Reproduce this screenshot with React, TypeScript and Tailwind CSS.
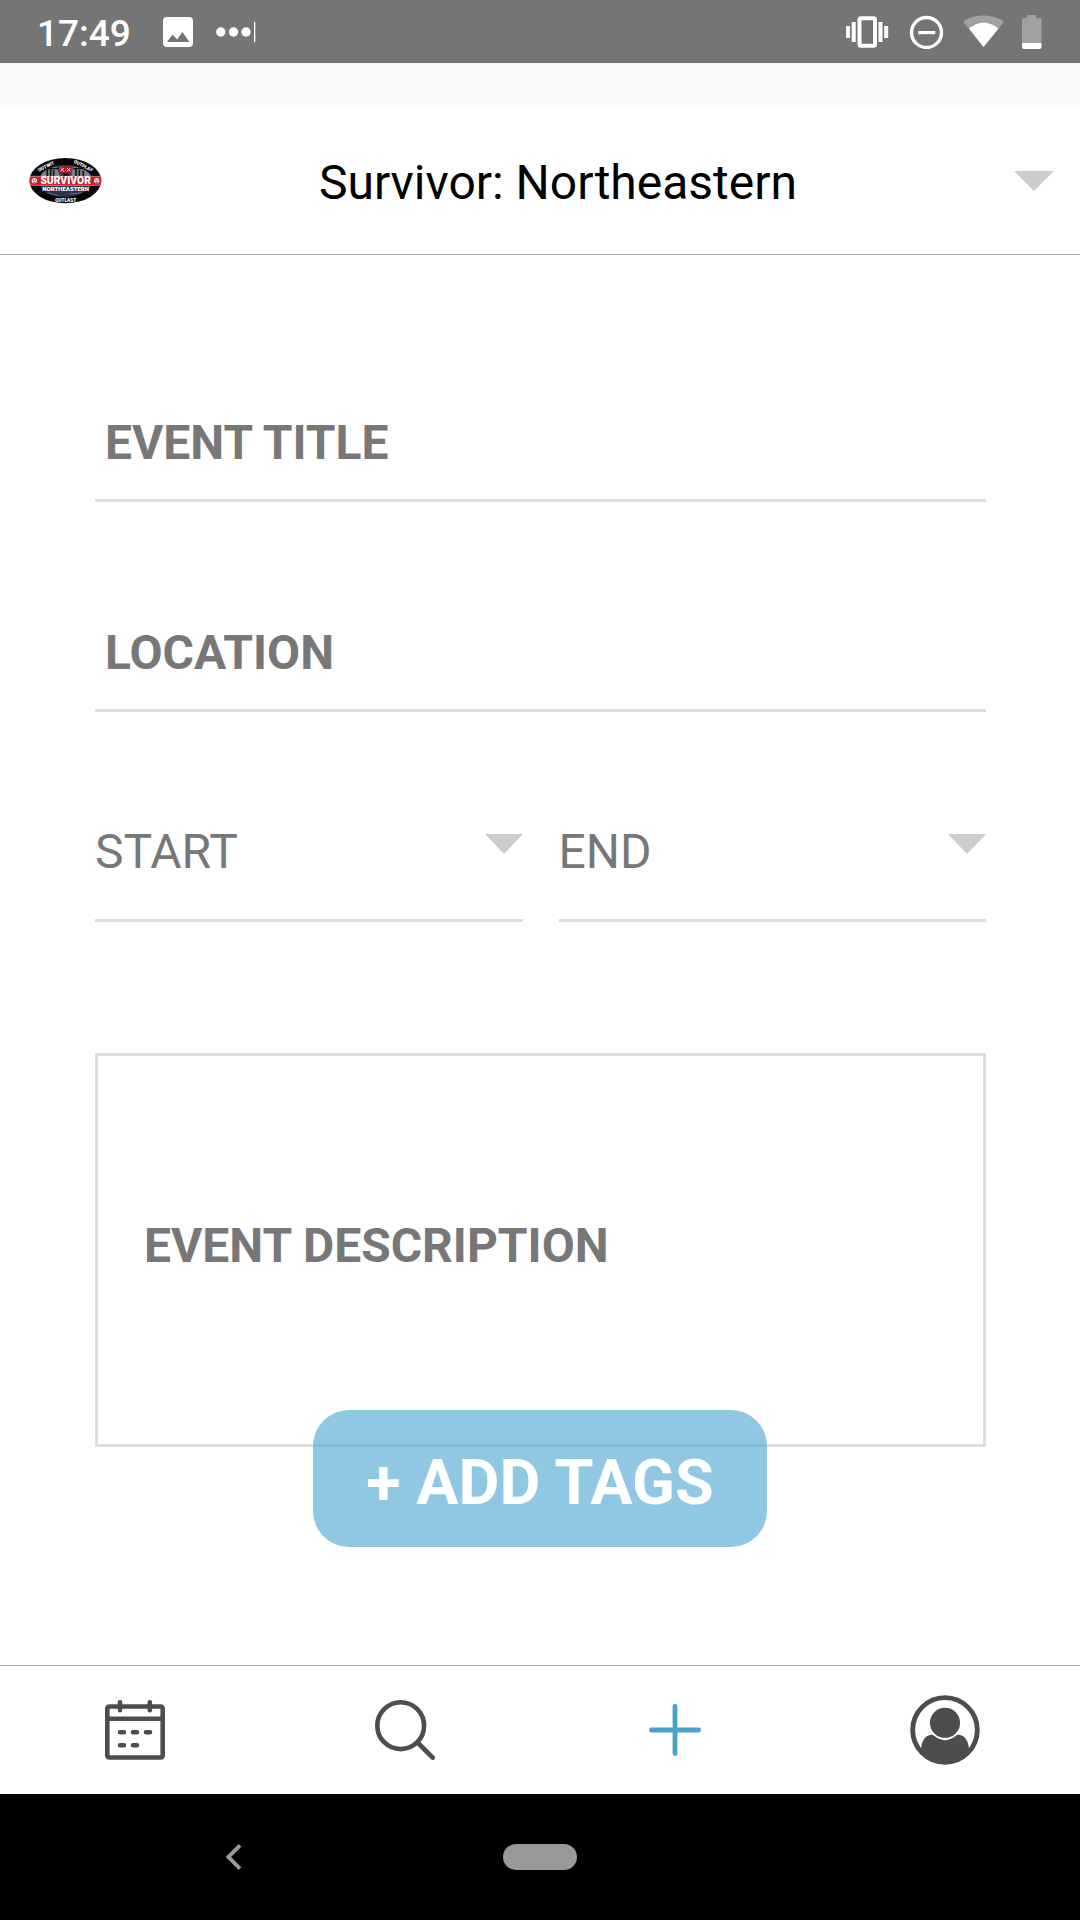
import React from "react";

function Triangle({ className = "" }: { className?: string }) {
  return (
    <svg viewBox="0 0 40 20" preserveAspectRatio="none" className={className} aria-hidden="true">
      <path d="M0 0H40L20 20Z" fill="#cdcdcd" />
    </svg>
  );
}

function StatusBar() {
  return (
    <div className="flex h-[63px] items-center justify-between bg-[#757575] pr-[38px] pl-[37px] text-white">
      <div className="flex items-center">
        <time className="pt-[3px] text-[37px] leading-[43px] font-medium">17:49</time>
        <svg className="ml-[32px] h-[30px] w-[30px]" viewBox="0 0 30 30" aria-hidden="true">
          <rect width="30" height="30" rx="4" fill="#fff" />
          <path d="M4 25L9.500 17.500L14 22.500L19.500 15L26.500 25Z" fill="#757575" />
        </svg>
        <svg className="ml-[23px] h-[20px] w-[40px]" viewBox="0 0 40 20" fill="#fff" aria-hidden="true">
          <circle cx="4.800" cy="10" r="4.700" />
          <circle cx="17.500" cy="10" r="4.700" />
          <circle cx="30" cy="10" r="4.700" />
          <rect x="38" width="1.300" height="20" />
        </svg>
      </div>
      <svg className="h-[34px] w-[196px]" viewBox="0 0 196 34" aria-hidden="true">
        <g fill="#fff">
          <rect x="0" y="11" width="4" height="12" />
          <rect x="5.700" y="7" width="4" height="20" />
          <rect x="32.500" y="7" width="4" height="20" />
          <rect x="38.200" y="11" width="4" height="12" />
        </g>
        <rect x="13.500" y="3.200" width="15.500" height="27.500" rx="1.500" fill="none" stroke="#fff" strokeWidth="4" />
        <circle cx="80.500" cy="17.500" r="15" fill="none" stroke="#fff" strokeWidth="3.400" />
        <rect x="72.300" y="16" width="17" height="3.200" fill="#fff" />
        <path d="M137.500 32L117.500 7.500Q117.500 5.500 120 4.500Q137.500-3.500 155 4.500Q158 5.500 157.500 7.500Z" fill="#a1a1a1" />
        <path d="M137.500 32L123 13.500Q137.500 2 152.500 13.500Z" fill="#fff" />
        <path d="M181 0H190V3H193.500Q195.500 3 195.500 5V28H176V5Q176 3 178 3H181Z" fill="#a1a1a1" />
        <path d="M176 28H195.500V32Q195.500 34 193.500 34H178Q176 34 176 32Z" fill="#fff" />
      </svg>
    </div>
  );
}

function SurvivorLogo() {
  return (
    <svg viewBox="28 38 217 138" className="h-[46px] w-[73px] shrink-0 font-['Roboto']" role="img" aria-label="Survivor Northeastern">
      <ellipse cx="136" cy="106" rx="108" ry="68" fill="#080808" />
      <ellipse cx="137" cy="106" rx="80" ry="47" fill="#343a4c" />
      <path d="M66 84Q85 66 110 64L120 92H62ZM158 64Q190 66 209 86L212 92H154Z" fill="#7c8088" />
      <path d="M82 72V92M92 70V92M101 74V92M168 70V92M178 74V92M190 76V92" stroke="#101010" strokeWidth="5" />
      <path d="M78 70H116M160 70H196" stroke="#111" strokeWidth="4" />
      <circle cx="128" cy="73" r="11" fill="#b51f2c" />
      <circle cx="146" cy="73" r="11" fill="#b51f2c" />
      <path d="M122 68L132 78M132 68L122 78M141 68L151 78M151 68L141 78" stroke="#eee" strokeWidth="3" />
      <path d="M130 84H146V92H130Z" fill="#111" />
      <path d="M75 140Q105 132 130 140Q170 130 198 138Q170 154 137 154Q98 154 75 140Z" fill="#30334f" />
      <path d="M82 142L116 152M150 146L184 142" stroke="#696b7e" strokeWidth="3" />
      <path d="M30 93H243L245 106L242 120H31L28 106Z" fill="#c81c28" stroke="#f4dede" strokeWidth="1.500" />
      <circle cx="43" cy="106" r="8" fill="#eee" />
      <circle cx="230" cy="106" r="8" fill="#eee" />
      <path d="M38 102L42 106M48 102L44 106M40 111H46M225 102L229 106M235 102L231 106M227 111H233" stroke="#a41925" strokeWidth="3" />
      <g fill="#fff" fontWeight="900" textAnchor="middle">
        <text x="137" y="117" fontSize="31">SURVIVOR</text>
        <text x="137" y="136" fontSize="18">NORTHEASTERN</text>
        <text x="78" y="68" fontSize="14" transform="rotate(-27 78 63)">OUTWIT</text>
        <text x="190" y="66" fontSize="14" transform="rotate(27 190 61)">OUTPLAY</text>
        <text x="137" y="169" fontSize="14">OUTLAST</text>
      </g>
    </svg>
  );
}

function Header() {
  return (
    <header className="flex h-[147px] items-center border-b border-[#b2b2b2] bg-white pr-[26px] pl-[29px]">
      <SurvivorLogo />
      <select
        aria-label="Organization"
        className="min-w-0 flex-1 appearance-none bg-transparent pt-1 text-center text-[48px] leading-[56px] text-black [text-align-last:center]"
      >
        <option>Survivor: Northeastern</option>
      </select>
      <Triangle className="h-[20px] w-[40px] shrink-0" />
    </header>
  );
}

function TextField({ label, className = "" }: { label: string; className?: string }) {
  return (
    <input
      type="text"
      aria-label={label}
      placeholder={label}
      className={`block h-[87px] w-full border-b-3 border-[#dedede] pb-[30px] pl-[10px] text-[48px] leading-[56px] font-bold text-[#777777] placeholder:text-[#777777] placeholder:opacity-100 ${className}`}
    />
  );
}

function TimeSelect({ label }: { label: string }) {
  return (
    <div className="relative min-w-0 flex-1">
      <select
        aria-label={label}
        className="block w-full appearance-none border-b-3 border-[#dedede] bg-transparent pb-[39px] text-[48px] leading-[56px] text-[#777777]"
      >
        <option>{label}</option>
      </select>
      <Triangle className="pointer-events-none absolute top-[10px] right-0 h-[20px] w-[38px]" />
    </div>
  );
}

function EventForm() {
  return (
    <main className="relative flex-1 pt-[160px] pr-[94px] pb-[218px] pl-[95px]">
      <form>
        <TextField label="EVENT TITLE" />
        <TextField label="LOCATION" className="mt-[123px]" />
        <div className="mt-[112px] flex gap-9">
          <TimeSelect label="START" />
          <TimeSelect label="END" />
        </div>
        <textarea
          aria-label="EVENT DESCRIPTION"
          placeholder="EVENT DESCRIPTION"
          className="mt-[131px] block h-[394px] w-full resize-none border-3 border-[#dedede] pt-[162px] pl-[46px] text-[48px] leading-[56px] font-bold text-[#777777] placeholder:text-[#777777] placeholder:opacity-100"
        />
        <div className="absolute inset-x-0 bottom-[118px] flex justify-center">
          <button
            type="button"
            className="rounded-[36px] bg-[#46a2cf]/60 px-[53px] pt-[35px] pb-[27px] text-[63px] leading-[75px] font-bold text-white"
          >
            + ADD TAGS
          </button>
        </div>
      </form>
    </main>
  );
}

function TabBar() {
  const tab = "flex flex-1 items-center justify-center";
  return (
    <nav className="flex h-[129px] border-t border-[#b2b2b2] bg-white text-[#4d4d4d]">
      <button type="button" aria-label="Calendar" className={tab}>
        <svg className="h-[60px] w-[60px]" viewBox="0 0 60 60" fill="none" stroke="currentColor" strokeWidth="4.600" strokeLinecap="round" aria-hidden="true">
          <rect x="2.300" y="6.500" width="55.400" height="51" rx="2" />
          <path d="M2.300 18.800H57.700M15 2.300V10.200M44.800 2.300V10.200" />
          <path d="M15 32.200H19M28 32.200H32M41 32.200H45M15 45.200H19M28 45.200H32" />
        </svg>
      </button>
      <button type="button" aria-label="Search" className={tab}>
        <svg className="h-[60px] w-[60px]" viewBox="0 0 60 60" fill="none" stroke="currentColor" strokeWidth="4.600" strokeLinecap="round" aria-hidden="true">
          <circle cx="25.700" cy="25.700" r="23.400" />
          <path d="M43 43L57.700 57.700" />
        </svg>
      </button>
      <button type="button" aria-label="Add event" aria-current="page" className={tab}>
        <svg className="h-[52px] w-[52px]" viewBox="0 0 52 52" fill="none" stroke="#4aa1cc" strokeWidth="4.800" strokeLinecap="round" aria-hidden="true">
          <path d="M26 2.400V49.600M2.400 26H49.600" />
        </svg>
      </button>
      <button type="button" aria-label="Profile" className={tab}>
        <svg className="h-[70px] w-[70px]" viewBox="872 136 209 209" aria-hidden="true">
          <circle cx="976.500" cy="240.500" r="96.500" fill="none" stroke="currentColor" strokeWidth="14.500" />
          <circle cx="976.500" cy="219" r="45" fill="currentColor" />
          <path
            d="M905 296C907 272 918 257 935 255Q940 254 944 258Q976.500 284 1009 258Q1013 254 1018 255C1035 257 1046 272 1048 296L1054 300A98 98 0 0 1 899 300Z"
            fill="currentColor"
          />
        </svg>
      </button>
    </nav>
  );
}

function SystemNavigation() {
  return (
    <div className="grid h-[126px] grid-cols-[1fr_74px_1fr] items-center bg-black">
      <button type="button" aria-label="Back" className="ml-[226px] w-[16px]">
        <svg className="block h-[26px] w-[16px]" viewBox="0 0 16 26" fill="none" stroke="#999999" strokeWidth="3.800" aria-hidden="true">
          <path d="M14 1.300L2.500 13L14 24.700" />
        </svg>
      </button>
      <button type="button" aria-label="Home" className="h-[26px] rounded-full bg-[#999999]" />
    </div>
  );
}

export default function App() {
  return (
    <div className="flex min-h-screen flex-col bg-white font-['Roboto',sans-serif]">
      <StatusBar />
      <div className="h-[45px] bg-[#fafafa]" />
      <Header />
      <EventForm />
      <TabBar />
      <SystemNavigation />
    </div>
  );
}
